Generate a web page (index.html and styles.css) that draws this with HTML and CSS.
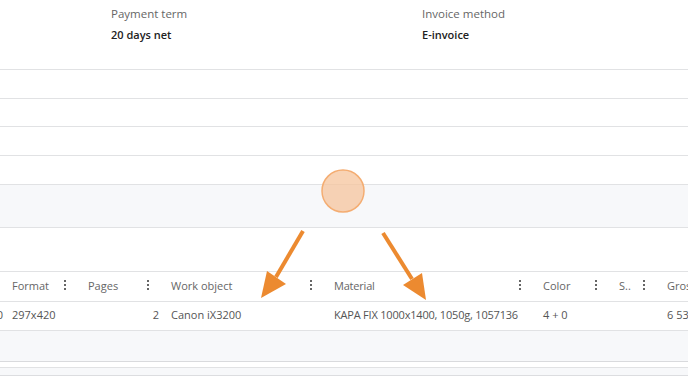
FILE: index.html
```html
<!DOCTYPE html>
<html lang="en">
<head>
    <meta charset="UTF-8">
    <meta name="viewport" content="width=device-width, initial-scale=1.0">
    <title>Order details</title>
    <link rel="stylesheet" href="styles.css">
</head>
<body>

    <div class="page">
        <div class="info">
            <div class="info-item">
                <div class="info-label">Payment term</div>
                <div class="info-value">20 days net</div>
            </div>
            <div class="info-item">
                <div class="info-label">Invoice method</div>
                <div class="info-value">E-invoice</div>
            </div>
        </div>

        <div class="blank-row"></div>
        <div class="blank-row short"></div>
        <div class="blank-row"></div>
        <div class="blank-row"></div>
        <div class="band"></div>
        <div class="gap"></div>

        <div class="grid-row head">
            <div class="cell c0"></div>
            <div class="cell c-format">Format <span class="kebab"><i></i><i></i><i></i></span></div>
            <div class="cell c-pages">Pages <span class="kebab"><i></i><i></i><i></i></span></div>
            <div class="cell c-work">Work object <span class="kebab"><i></i><i></i><i></i></span></div>
            <div class="cell c-material">Material <span class="kebab"><i></i><i></i><i></i></span></div>
            <div class="cell c-color">Color <span class="kebab"><i></i><i></i><i></i></span></div>
            <div class="cell c-s">S.. <span class="kebab"><i></i><i></i><i></i></span></div>
            <div class="cell c-gross">Gross</div>
        </div>

        <div class="grid-row data">
            <div class="cell c0">0</div>
            <div class="cell c-format">297x420</div>
            <div class="cell c-pages num">2</div>
            <div class="cell c-work">Canon iX3200</div>
            <div class="cell c-material">KAPA FIX 1000x1400, 1050g, 1057136</div>
            <div class="cell c-color">4 + 0</div>
            <div class="cell c-s"></div>
            <div class="cell c-gross">6 530</div>
        </div>

        <div class="band low"></div>
        <div class="thin-gap"></div>
        <div class="scroll-track"></div>
        <div class="footer"></div>
    </div>

    <svg class="marks" width="688" height="384" viewBox="0 0 688 384">
        <circle cx="343" cy="191" r="21" fill="#f6c49c" fill-opacity="0.75" stroke="#f4ad72" stroke-width="1.5"/>
        <line x1="303" y1="231" x2="276" y2="277" stroke="#ec8a30" stroke-width="4"/>
        <polygon points="261,298 267,271 286,284" fill="#ec8a30"/>
        <line x1="383" y1="233" x2="412" y2="279" stroke="#ec8a30" stroke-width="4"/>
        <polygon points="426,300 403,285 422,273" fill="#ec8a30"/>
    </svg>

</body>
</html>
```

FILE: styles.css
```css
body {
    margin: 0;
    background-color: #fff;
    font-family: "Open Sans", "Noto Sans", sans-serif;
    font-size: 11px;
    color: #444;
    overflow: hidden;
    width: 688px;
    height: 384px;
    position: relative;
}

.page {
    display: flex;
    flex-direction: column;
}

.info {
    display: flex;
    height: 70px;
    padding-left: 111px;
    box-sizing: border-box;
    padding-top: 6px;
    border-bottom: 1px solid #e1e2e4;
}

.info-item {
    width: 311px;
    flex-shrink: 0;
}

.info-label {
    color: #666;
    font-size: 11.5px;
    line-height: 15px;
}

.info-value {
    margin-top: 6px;
    color: #222;
    font-weight: 600;
    font-size: 11px;
    line-height: 15px;
}

.blank-row {
    height: 28px;
    border-bottom: 1px solid #e1e2e4;
}

.blank-row.short {
    height: 27px;
}

.band {
    height: 42px;
    background-color: #f7f8fa;
    border-bottom: 1px solid #e1e2e4;
}

.gap {
    height: 43px;
    border-bottom: 1px solid #e1e2e4;
}

.grid-row {
    display: flex;
    height: 29px;
    box-sizing: border-box;
    padding-bottom: 3px;
    align-items: center;
    border-bottom: 1px solid #e1e2e4;
    white-space: nowrap;
}

.grid-row.head {
    height: 30px;
    color: #666;
}

.grid-row.data {
    color: #555;
}

.cell {
    display: flex;
    align-items: center;
    flex-shrink: 0;
    box-sizing: border-box;
    padding-left: 12px;
    padding-right: 8px;
}

/* tail of a column scrolled off to the left */
.c0 {
    width: 3px;
    margin-right: -3px;
    padding: 0;
    justify-content: flex-end;
}

.c-format { width: 76px; }
.c-pages { width: 83px; }
.c-work { width: 163px; }
.c-material { width: 209px; letter-spacing: -0.2px; }
.c-color { width: 76px; }
.c-s { width: 48px; }
.c-gross { width: 60px; padding-right: 0; }

.cell.num {
    justify-content: flex-end;
    padding-right: 0;
}

.kebab {
    margin-left: auto;
    display: flex;
    flex-direction: column;
    gap: 2px;
    padding-right: 2px;
    letter-spacing: 0;
}

.kebab i {
    display: block;
    width: 2px;
    height: 2px;
    border-radius: 1px;
    background-color: #333;
}

.band.low {
    height: 30px;
    border-bottom: 1px solid #d9dadd;
}

.thin-gap {
    height: 5px;
    border-bottom: 1px solid #e1e2e4;
}

.scroll-track {
    height: 7px;
    background-color: #f7f8fa;
    border-bottom: 1px solid #dcdde0;
}

.footer {
    height: 10px;
}

.marks {
    position: absolute;
    left: 0;
    top: 0;
    pointer-events: none;
}
```
